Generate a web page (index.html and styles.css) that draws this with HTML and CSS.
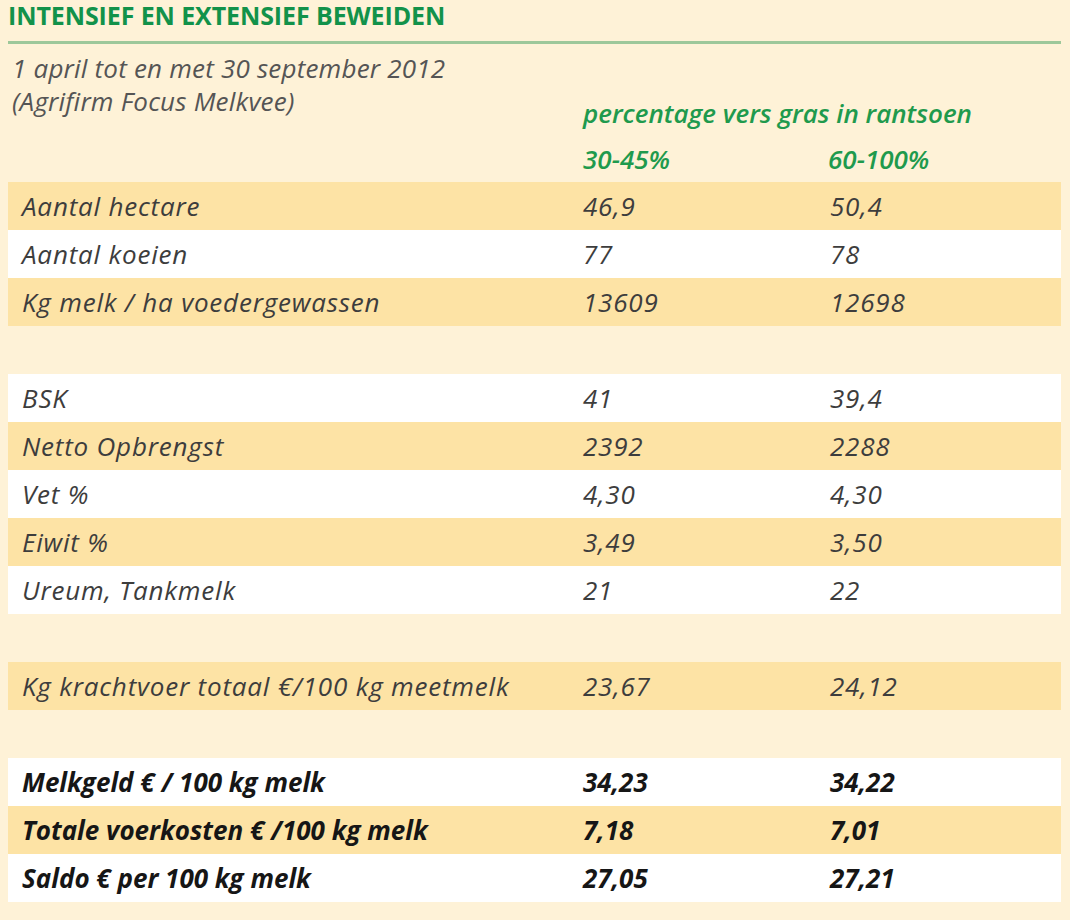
FILE: index.html
```html
<!DOCTYPE html>
<html lang="nl">
<head>
<meta charset="utf-8">
<title>Intensief en extensief beweiden</title>
<link rel="stylesheet" href="styles.css">
</head>
<body>
<div class="page">
  <h1 class="title">INTENSIEF EN EXTENSIEF BEWEIDEN</h1>
  <div class="rule"></div>
  <div class="head">
    <div class="sub">1 april tot en met 30 september 2012<br>(Agrifirm Focus Melkvee)</div>
    <div class="head-right">
      <div class="pct-title">percentage vers gras in rantsoen</div>
      <div class="pct-cols"><span>30-45%</span><span>60-100%</span></div>
    </div>
  </div>
  <div class="table">
    <div class="row y"><span>Aantal hectare</span><span>46,9</span><span>50,4</span></div>
    <div class="row w"><span>Aantal koeien</span><span>77</span><span>78</span></div>
    <div class="row y"><span>Kg melk / ha voedergewassen</span><span>13609</span><span>12698</span></div>
    <div class="row blank"></div>
    <div class="row w"><span>BSK</span><span>41</span><span>39,4</span></div>
    <div class="row y"><span>Netto Opbrengst</span><span>2392</span><span>2288</span></div>
    <div class="row w"><span>Vet %</span><span>4,30</span><span>4,30</span></div>
    <div class="row y"><span>Eiwit %</span><span>3,49</span><span>3,50</span></div>
    <div class="row w"><span>Ureum, Tankmelk</span><span>21</span><span>22</span></div>
    <div class="row blank"></div>
    <div class="row y"><span>Kg krachtvoer totaal €/100 kg meetmelk</span><span>23,67</span><span>24,12</span></div>
    <div class="row blank"></div>
    <div class="row w b"><span>Melkgeld € / 100 kg melk</span><span>34,23</span><span>34,22</span></div>
    <div class="row y b"><span>Totale voerkosten € /100 kg melk</span><span>7,18</span><span>7,01</span></div>
    <div class="row w b"><span>Saldo € per 100 kg melk</span><span>27,05</span><span>27,21</span></div>
  </div>
</div>
</body>
</html>
```
FILE: styles.css
```css
html, body {
  margin: 0;
  padding: 0;
  background: #fef2d7;
}
body {
  font-family: "Open Sans", "DejaVu Sans", sans-serif;
  color: #3d3d3d;
}
.page {
  width: 1053px;
  padding: 0 9px 0 8px;
}
.title {
  margin: 0 0 11px 0;
  font-size: 25px;
  line-height: 30px;
  font-weight: 700;
  color: #12924a;
  letter-spacing: -0.1px;
}
.rule {
  height: 3px;
  background: #9dc89a;
}
.head {
  display: grid;
  grid-template-columns: 575px 1fr;
  height: 138px;
}
.sub {
  padding: 8px 0 0 4px;
  font-size: 26px;
  line-height: 33px;
  font-style: italic;
  letter-spacing: 0.2px;
  color: #555;
}
.head-right {
  padding-top: 52px;
  font-style: italic;
  font-weight: 600;
  color: #1f9a4d;
  font-size: 26px;
}
.pct-title {
  line-height: 34px;
}
.pct-cols {
  display: grid;
  grid-template-columns: 245px 1fr;
  margin-top: 12px;
  line-height: 34px;
}
.row {
  display: grid;
  grid-template-columns: 561px 247px 1fr;
  align-items: center;
  height: 48px;
  padding-left: 14px;
  font-size: 26px;
  font-style: italic;
  letter-spacing: 0.8px;
}
.row.y { background: #fde3a5; }
.row.w { background: #ffffff; }
.row.blank { background: transparent; }
.row.b {
  font-weight: 700;
  letter-spacing: 0;
  color: #161616;
}
```
